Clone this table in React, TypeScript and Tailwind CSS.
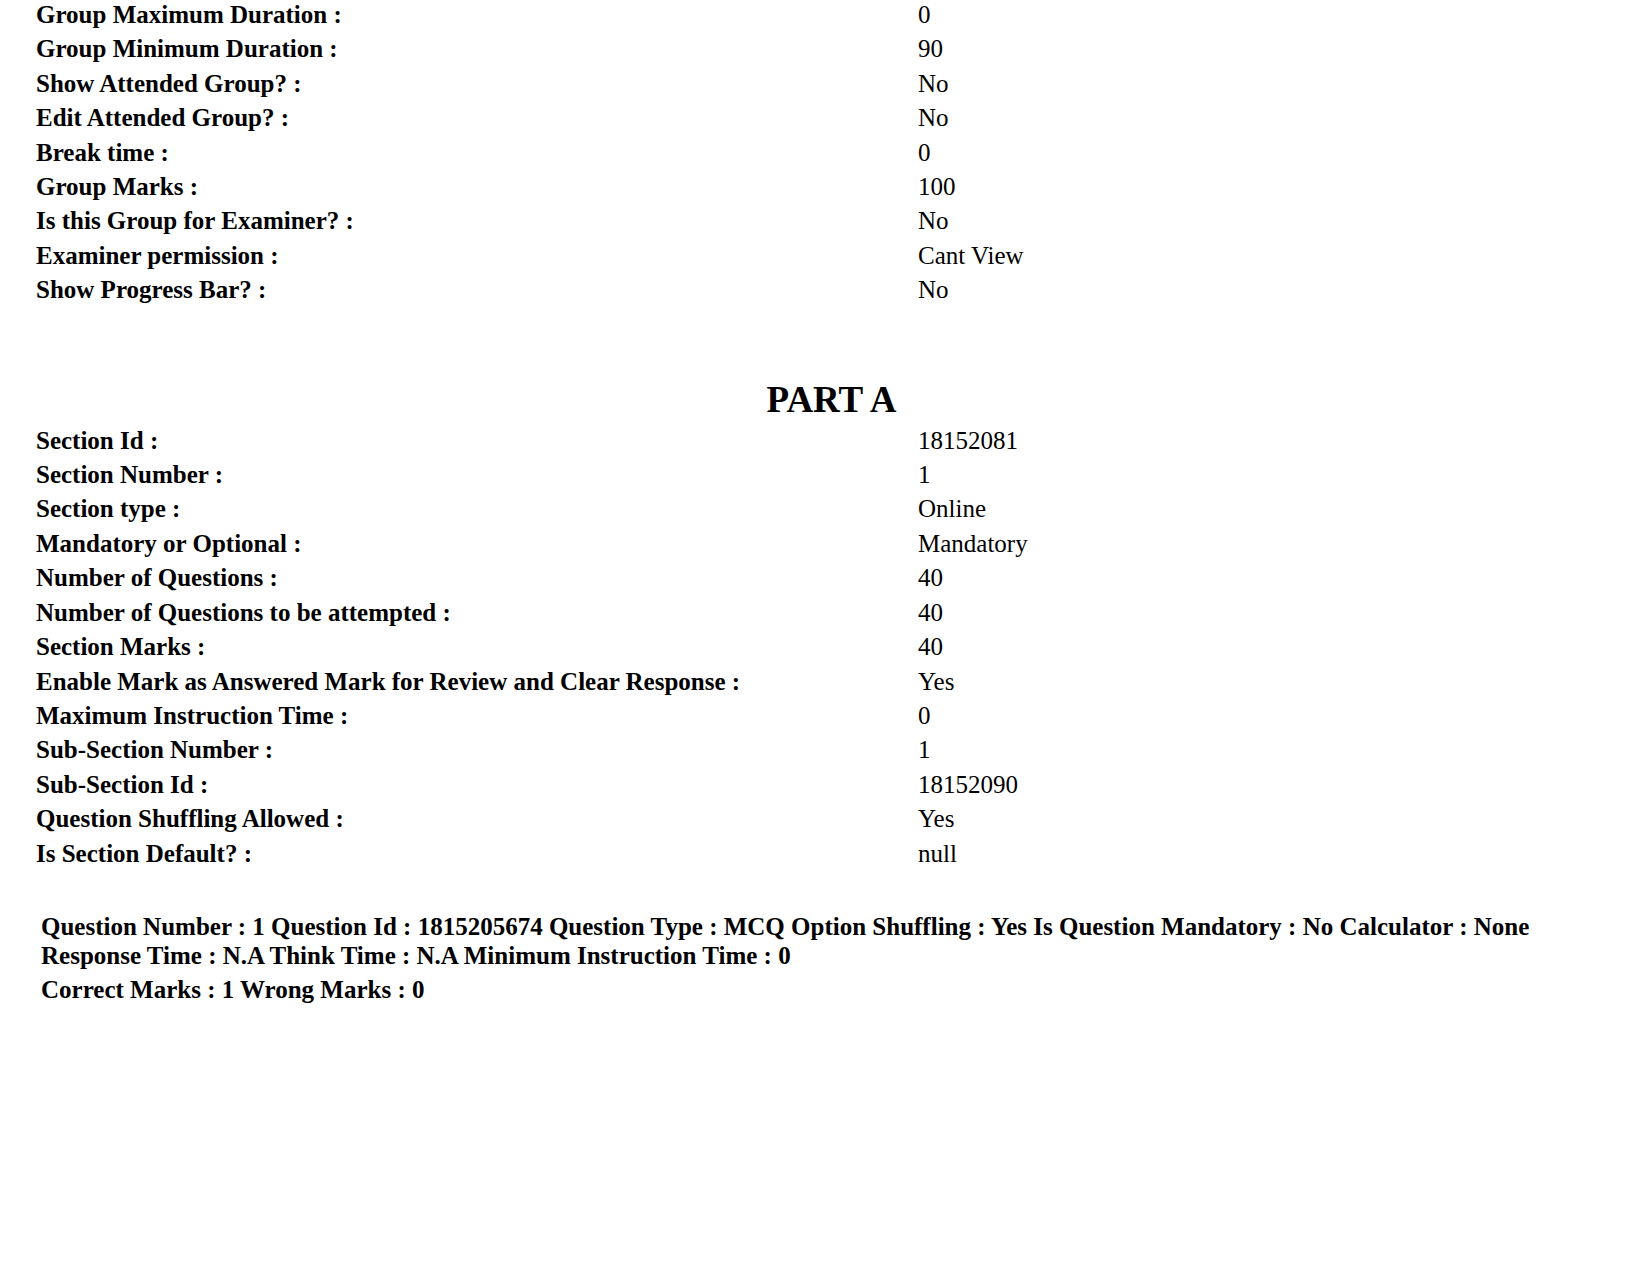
const groupRows: [string, string][] = [
  ['Group Maximum Duration :', '0'],
  ['Group Minimum Duration :', '90'],
  ['Show Attended Group? :', 'No'],
  ['Edit Attended Group? :', 'No'],
  ['Break time :', '0'],
  ['Group Marks :', '100'],
  ['Is this Group for Examiner? :', 'No'],
  ['Examiner permission :', 'Cant View'],
  ['Show Progress Bar? :', 'No'],
];

const sectionRows: [string, string][] = [
  ['Section Id :', '18152081'],
  ['Section Number :', '1'],
  ['Section type :', 'Online'],
  ['Mandatory or Optional :', 'Mandatory'],
  ['Number of Questions :', '40'],
  ['Number of Questions to be attempted :', '40'],
  ['Section Marks :', '40'],
  ['Enable Mark as Answered Mark for Review and Clear Response :', 'Yes'],
  ['Maximum Instruction Time :', '0'],
  ['Sub-Section Number :', '1'],
  ['Sub-Section Id :', '18152090'],
  ['Question Shuffling Allowed :', 'Yes'],
  ['Is Section Default? :', 'null'],
];

function InfoTable({ rows }: { rows: [string, string][] }) {
  return (
    <div className="grid grid-cols-[882px_1fr] text-[25px] leading-[34.4px]">
      {rows.map(([label, value]) => (
        <div key={label} className="contents">
          <div className="font-bold whitespace-nowrap">{label}</div>
          <div className="whitespace-nowrap">{value}</div>
        </div>
      ))}
    </div>
  );
}

export default function App() {
  return (
    <div className="flex flex-col min-h-screen bg-white text-black font-['Liberation_Serif','Times_New_Roman',serif] pl-[36px] pr-[24px]">
      {/* group settings */}
      <div className="-mt-[2px]">
        <InfoTable rows={groupRows} />
      </div>

      {/* section */}
      <h2 className="mt-[72px] text-center text-[37px] leading-[40px] font-bold">PART A</h2>
      <div className="mt-[4px]">
        <InfoTable rows={sectionRows} />
      </div>

      {/* question header */}
      <div className="mt-[41px] ml-[5px] w-[1580px] font-bold text-[25px]">
        <p className="leading-[29.5px]">
          Question Number : 1 Question Id : 1815205674 Question Type : MCQ Option Shuffling : Yes Is Question Mandatory : No Calculator : None Response Time : N.A Think Time : N.A Minimum Instruction Time : 0
        </p>
        <p className="mt-[4px] leading-[29.5px]">Correct Marks : 1 Wrong Marks : 0</p>
      </div>
    </div>
  );
}
